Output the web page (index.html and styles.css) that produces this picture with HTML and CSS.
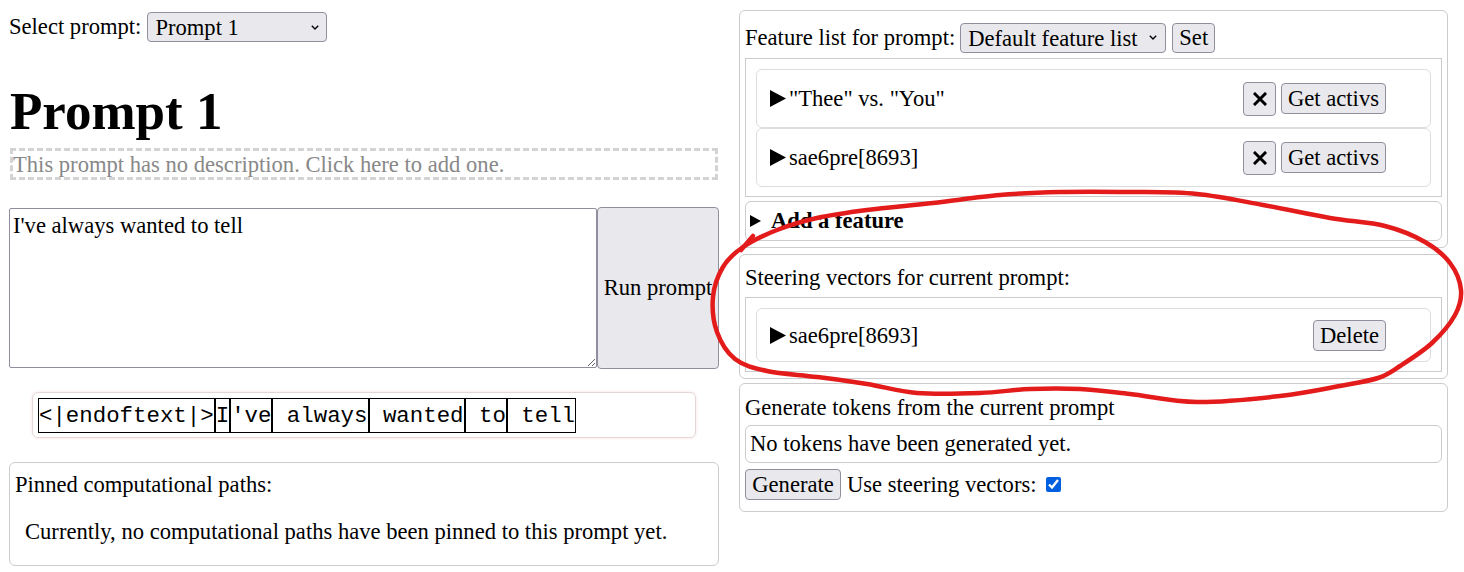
FILE: index.html
```html
<!DOCTYPE html>
<html>
<head>
<meta charset="utf-8">
<title>Prompt 1</title>
<link rel="stylesheet" href="styles.css">
</head>
<body>
<div class="page">
  <div class="left">
    <div class="select-row">
      <span>Select prompt:</span>
      <span class="sel-wrap sel-prompt">
        <select class="sel"><option>Prompt 1</option></select>
        <svg class="chev" viewBox="0 0 8 5"><polyline points="0.8,0.8 4,4 7.2,0.8" fill="none" stroke="#000" stroke-width="1.4"/></svg>
      </span>
    </div>
    <h1 class="title">Prompt 1</h1>
    <div class="desc">This prompt has no description. Click here to add one.</div>
    <div class="input-row">
      <textarea class="prompt-input">I've always wanted to tell</textarea>
      <button class="btn run-btn">Run prompt</button>
    </div>
    <div class="tokens"><span class="tok">&lt;|endoftext|&gt;</span><span class="tok">I</span><span class="tok">'ve</span><span class="tok"> always</span><span class="tok"> wanted</span><span class="tok"> to</span><span class="tok"> tell</span></div>
    <div class="pinned">
      <div class="line">Pinned computational paths:</div>
      <p class="pinned-empty">Currently, no computational paths have been pinned to this prompt yet.</p>
    </div>
  </div>

  <div class="right">
    <div class="panel panel-features">
      <div class="feat-header">
        <span>Feature list for prompt:</span>
        <span class="sel-wrap sel-features">
          <select class="sel"><option>Default feature list</option></select>
          <svg class="chev" viewBox="0 0 8 5"><polyline points="0.8,0.8 4,4 7.2,0.8" fill="none" stroke="#000" stroke-width="1.4"/></svg>
        </span>
        <button class="btn set-btn">Set</button>
      </div>
      <div class="list list-features">
        <div class="item item-feature">
          <div class="name"><svg class="tri" viewBox="0 0 16 17"><polygon points="0,0 16,8.5 0,17" fill="#000"/></svg><span>"Thee" vs. "You"</span></div>
          <button class="btn x-btn"><svg viewBox="0 0 14 14"><path d="M2 2 L12 12 M12 2 L2 12" stroke="#000" stroke-width="3" stroke-linecap="square"/></svg></button>
          <button class="btn act-btn">Get activs</button>
        </div>
        <div class="item item-feature">
          <div class="name"><svg class="tri" viewBox="0 0 16 17"><polygon points="0,0 16,8.5 0,17" fill="#000"/></svg><span>sae6pre[8693]</span></div>
          <button class="btn x-btn"><svg viewBox="0 0 14 14"><path d="M2 2 L12 12 M12 2 L2 12" stroke="#000" stroke-width="3" stroke-linecap="square"/></svg></button>
          <button class="btn act-btn">Get activs</button>
        </div>
      </div>
      <div class="add-feature">
        <svg class="mini-tri" viewBox="0 0 11 12"><polygon points="0,0 11,6 0,12" fill="#000"/></svg>
        <span>Add a feature</span>
      </div>
    </div>

    <div class="panel panel-steering">
      <div class="line">Steering vectors for current prompt:</div>
      <div class="list">
        <div class="item item-steer">
          <div class="name"><svg class="tri" viewBox="0 0 16 17"><polygon points="0,0 16,8.5 0,17" fill="#000"/></svg><span>sae6pre[8693]</span></div>
          <button class="btn del-btn">Delete</button>
        </div>
      </div>
    </div>

    <div class="panel panel-generate">
      <div class="line">Generate tokens from the current prompt</div>
      <div class="gen-out">No tokens have been generated yet.</div>
      <div class="gen-row">
        <button class="btn gen-btn">Generate</button>
        <span>Use steering vectors:</span>
        <input type="checkbox" class="chk" checked>
      </div>
    </div>
  </div>
</div>

<svg class="annotation" viewBox="0 0 1464 572" width="1464" height="572">
  <path d="M743 247 C752 240.8 764.7 234.8 777 230 C789.3 225.2 802 221.3 817 218 C832 214.7 847.7 212.5 867 210 C886.3 207.5 910.8 205.5 933 203 C955.2 200.5 978.8 196.8 1000 195 C1021.2 193.2 1038.3 192.5 1060 192 C1081.7 191.5 1107.2 191.7 1130 192 C1152.8 192.3 1174.8 191.8 1197 194 C1219.2 196.2 1240.8 201 1263 205 C1285.2 209 1309.7 214.5 1330 218 C1350.3 221.5 1369.2 222 1385 226 C1400.8 230 1414.2 235.8 1425 242 C1435.8 248.2 1444 255 1450 263 C1456 271 1460.2 281.3 1461 290 C1461.8 298.7 1459.8 306.2 1455 315 C1450.2 323.8 1441.2 334.5 1432 343 C1422.8 351.5 1409 360.2 1400 366 C1391 371.8 1388 374.7 1378 378 C1368 381.3 1356.3 383 1340 386 C1323.7 389 1303.8 393.3 1280 396 C1256.2 398.7 1222 402.3 1197 402 C1172 401.7 1149.5 396.2 1130 394 C1110.5 391.8 1096.7 389.8 1080 389 C1063.3 388.2 1046.7 388.3 1030 389 C1013.3 389.7 998.8 392.3 980 393 C961.2 393.7 935.8 394.5 917 393 C898.2 391.5 883.7 386.7 867 384 C850.3 381.3 833.7 379.2 817 377 C800.3 374.8 780.7 374 767 371 C753.3 368 743.3 365.5 735 359 C726.7 352.5 720.7 342.3 717 332 C713.3 321.7 712 307.8 713 297 C714 286.2 718 275.3 723 267 C728 258.7 734 253.2 743 247" fill="none" stroke="#e31b1b" stroke-width="4.5" stroke-linejoin="round" stroke-linecap="round"/>
  <path d="M753 236 L741 250" fill="none" stroke="#e31b1b" stroke-width="4.5" stroke-linecap="round"/>
</svg>
</body>
</html>
```

FILE: styles.css
```css
* { box-sizing: border-box; }

html, body { margin: 0; padding: 0; }

body {
  font-family: "Liberation Serif", "Times New Roman", serif;
  font-size: 22.6px;
  line-height: 26px;
  color: #000;
  background: #fff;
  position: relative;
  width: 1464px;
  height: 572px;
  overflow: hidden;
}

.page {
  display: grid;
  grid-template-columns: 710px 709px;
  column-gap: 20px;
  padding-left: 9px;
}

/* ---------- generic controls ---------- */
.btn {
  font-family: inherit;
  font-size: 22.6px;
  line-height: 26px;
  color: #000;
  background: #e9e9ed;
  border: 1px solid #8f8f9d;
  border-radius: 4px;
  padding: 1px 6px;
  margin: 0;
  height: 31px;
}

.sel-wrap {
  position: relative;
  display: inline-block;
}

.sel {
  appearance: none;
  -webkit-appearance: none;
  font-family: inherit;
  font-size: 22.6px;
  color: #000;
  background: #e9e9ed;
  border: 1px solid #8f8f9d;
  border-radius: 4px;
  height: 30px;
  padding: 0 24px 0 7px;
  margin: 0;
  display: block;
}

.chev {
  position: absolute;
  width: 8px;
  height: 5px;
  right: 8px;
  top: 13px;
  pointer-events: none;
}

/* ---------- left column ---------- */
.select-row {
  margin-top: 12px;
  height: 30px;
  display: flex;
  align-items: center;
  gap: 6px;
}

.sel-prompt .sel { width: 180px; }

.title {
  margin: 41px 0 9px 1px;
  font-size: 53px;
  line-height: 56px;
  font-weight: bold;
}

.desc {
  margin: 0 1px;
  height: 32px;
  border: 3px dashed #d3d3d3;
  color: #888;
  line-height: 27px;
  padding: 0;
  white-space: nowrap;
}

.input-row {
  margin-top: 27px;
  height: 162px;
  display: flex;
  align-items: center;
}

.prompt-input {
  width: 588px;
  height: 160px;
  font-family: inherit;
  font-size: 22.6px;
  line-height: 26px;
  border: 1px solid #8f8f9d;
  border-radius: 2px;
  padding: 4px 3px 2px;
  margin: 0;
  resize: both;
  color: #000;
}

.run-btn {
  width: 122px;
  height: 162px;
  padding: 0;
}

.tokens {
  margin: 23px 23px 0;
  height: 46px;
  border: 1px solid #e6d6d6;
  border-radius: 6px;
  padding: 5px;
  box-shadow: 0 0 3px rgba(220, 120, 120, 0.25);
  white-space: nowrap;
  font-size: 0;
}

.tok {
  display: inline-block;
  vertical-align: top;
  font-family: "Liberation Mono", "Courier New", monospace;
  font-size: 22.4px;
  line-height: 34px;
  height: 35px;
  border: 1px solid #000;
  white-space: pre;
}

.pinned {
  margin-top: 24px;
  height: 104px;
  border: 1px solid #ccc;
  border-radius: 6px;
  padding: 9px 5px 7px;
}

.pinned-empty {
  margin: 21px 0 0 10px;
}

/* ---------- right column ---------- */
.panel {
  border: 1px solid #ccc;
  border-radius: 6px;
  padding: 0 5px;
}

.panel-features {
  margin-top: 10px;
  padding-top: 12px;
  padding-bottom: 6px;
}

.feat-header {
  height: 30px;
  display: flex;
  align-items: center;
  gap: 5px;
}

.sel-features .sel { width: 206px; }
.sel-features .chev { right: 9px; top: 12px; }

.set-btn {
  height: 30px;
  width: 43px;
  margin-left: 1px;
}

.list {
  margin-top: 4px;
  border: 1px solid #ccc;
  padding: 10px 10px 9px;
}

.list-features { margin-top: 5px; }

.item {
  display: flex;
  align-items: center;
  border: 1px solid #ddd;
  border-radius: 6px;
  padding: 11px 44px 11px 13px;
}

.item-feature { height: 59px; }
.item-steer { height: 54px; padding-bottom: 10px; }

.name {
  flex: 1;
  display: flex;
  align-items: center;
}

.tri {
  width: 16px;
  height: 17px;
  margin-right: 3px;
}

.x-btn {
  width: 33px;
  height: 34px;
  padding: 0;
  display: flex;
  align-items: center;
  justify-content: center;
  margin-right: 5px;
}

.x-btn svg {
  width: 14px;
  height: 14px;
}

.act-btn { width: 105px; padding: 1px 0; }
.del-btn { width: 73px; padding: 1px 0; }

.add-feature {
  margin-top: 4px;
  height: 40px;
  border: 1px solid #ccc;
  border-radius: 6px;
  padding: 6px 4px;
  display: flex;
  align-items: center;
  font-weight: bold;
}

.mini-tri {
  width: 11px;
  height: 12px;
  margin-right: 10px;
}

.panel-steering {
  margin-top: 6px;
  padding-top: 10px;
  padding-bottom: 6px;
}

.panel-steering .list { margin-top: 6px; }

.panel-generate {
  margin-top: 4px;
  padding-top: 11px;
  padding-bottom: 11px;
}

.gen-out {
  margin-top: 4px;
  height: 38px;
  border: 1px solid #ccc;
  border-radius: 6px;
  padding: 5px 4px;
}

.gen-row {
  margin-top: 6px;
  height: 31px;
  display: flex;
  align-items: center;
  gap: 6px;
}

.gen-btn { width: 96px; padding: 1px 0; }

.chk {
  width: 15px;
  height: 15px;
  margin: 0 0 0 4px;
  accent-color: #0060df;
}

/* ---------- hand-drawn annotation over the page ---------- */
.annotation {
  position: absolute;
  left: 0;
  top: 0;
  pointer-events: none;
}
```
